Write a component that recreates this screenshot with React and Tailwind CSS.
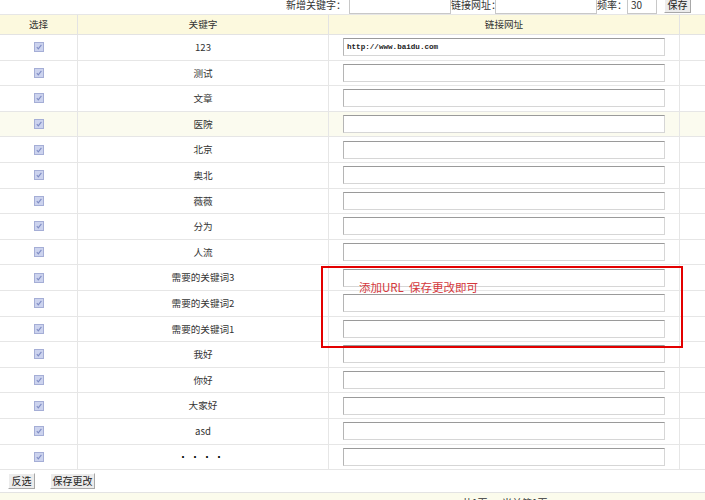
const rows = [
  { k: '123', url: 'http://www.baidu.com' },
  { k: '测试' },
  { k: '文章' },
  { k: '医院', hl: true },
  { k: '北京' },
  { k: '奥北' },
  { k: '薇薇' },
  { k: '分为' },
  { k: '人流' },
  { k: '需要的关键词3' },
  { k: '需要的关键词2' },
  { k: '需要的关键词1' },
  { k: '我好' },
  { k: '你好' },
  { k: '大家好' },
  { k: 'asd' },
  { k: 'dots' },
];

function Check() {
  return (
    <svg width="10" height="10" viewBox="0 0 10 10">
      <rect x="0.5" y="0.5" width="9" height="9" fill="#ccd3ee" stroke="#a5aed6" />
      <path d="M2.8 5.2 L4.3 6.8 L7.4 2.8" fill="none" stroke="#7f8cc4" strokeWidth="1.1" />
    </svg>
  );
}

function UrlInput({ value }) {
  return (
    <div className="ml-[14px] w-[322px] h-[18px] bg-white border border-[#d6d6d6] border-t-[#9a9a9a] border-l-[#b5b5b5] flex items-center px-[3px] font-['Liberation_Mono',monospace] text-[7.6px] font-bold text-[#222]">
      {value}
    </div>
  );
}

function Btn({ children, className = '' }) {
  return (
    <div className={`h-[16px] shrink-0 flex items-center justify-center bg-[#ececec] border border-white border-r-[#a8a8a8] border-b-[#a8a8a8] text-[10px] text-[#222] ${className}`}>
      {children}
    </div>
  );
}

export default function App() {
  return (
    <div className="w-[705px] h-[500px] overflow-hidden bg-white relative font-['Noto_Sans_CJK_SC',sans-serif] text-[9.6px] text-[#333]">
      {/* top form, partly scrolled off */}
      <div className="-mt-[5px] h-[19px] flex items-center whitespace-nowrap">
        <span className="ml-[286px] w-[63px] shrink-0 text-[10px]">新增关键字：</span>
        <div className="w-[102px] h-[18px] shrink-0 bg-white border border-[#c8c8c8] border-t-[#9a9a9a]" />
        <span className="w-[44px] shrink-0 text-[10px]">链接网址：</span>
        <div className="w-[102px] h-[18px] shrink-0 bg-white border border-[#c8c8c8] border-t-[#9a9a9a]" />
        <span className="w-[30px] shrink-0 text-[10px]">频率：</span>
        <div className="w-[30px] h-[18px] shrink-0 bg-white border border-[#c8c8c8] border-t-[#9a9a9a] flex items-center px-[3px] text-[10px]">30</div>
        <Btn className="ml-[7px] w-[27px] h-[17px]">保存</Btn>
      </div>

      {/* table */}
      <div className="border-t border-[#e6e6e6]">
        <div className="grid grid-cols-[78px_251px_351px_25px] h-[20px] bg-[#fcf9de] border-b border-[#e3e3e3]">
          <div className="flex items-center justify-center border-r border-[#e3e3e3]">选择</div>
          <div className="flex items-center justify-center border-r border-[#e3e3e3]">关键字</div>
          <div className="flex items-center justify-center border-r border-[#e3e3e3]">链接网址</div>
          <div />
        </div>
        {rows.map((r, i) => (
          <div
            key={i}
            className={`grid grid-cols-[78px_251px_351px_25px] h-[25.6px] border-b border-[#e6e6e6] ${r.hl ? 'bg-[#fbfbef]' : 'bg-white'}`}
          >
            <div className="flex items-center justify-center border-r border-[#e6e6e6]">
              <Check />
            </div>
            <div className="flex items-center justify-center border-r border-[#e6e6e6]">
              {r.k === 'dots' ? (
                <span className="font-bold text-[8px] tracking-[4px] text-black">••••</span>
              ) : (
                r.k
              )}
            </div>
            <div className="flex items-center border-r border-[#e6e6e6]">
              <UrlInput value={r.url} />
            </div>
            <div />
          </div>
        ))}
      </div>

      {/* footer buttons */}
      <div className="flex items-center h-[21px] pl-[8px] gap-[15px]">
        <Btn className="w-[27px]">反选</Btn>
        <Btn className="w-[45px]">保存更改</Btn>
      </div>
      <div className="mt-[1px] h-[20px] bg-[#fbfbec] border-t border-[#e3e3e3] flex">
        <span className="ml-[462px] mt-[2px] text-[10px] text-[#333]">共1页 · 当前第1页</span>
      </div>

      {/* annotation */}
      <div className="absolute left-[321px] top-[266px] w-[362px] h-[82px] border-2 border-[#e30000]">
        <span className="absolute left-[36px] top-[11px] text-[11.5px] text-[#d5383c] whitespace-pre">添加URL  保存更改即可</span>
      </div>
    </div>
  );
}
